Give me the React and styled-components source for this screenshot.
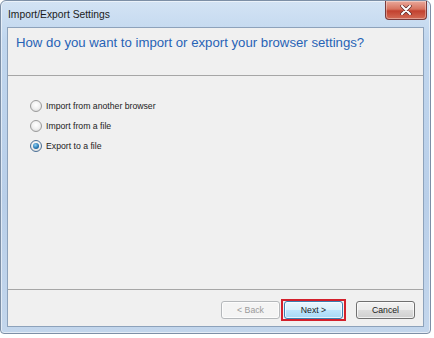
import React, { useState } from 'react';
import styled, { createGlobalStyle } from 'styled-components';

const Global = createGlobalStyle`
  body {
    margin: 0;
    background: #ffffff;
    font-family: "Liberation Sans", Arial, sans-serif;
  }
`;

const Window = styled.div`
  width: 431px;
  height: 334px;
  box-sizing: border-box;
  border: 1px solid #7d8fa6;
  border-radius: 6px 6px 4px 4px;
  background: linear-gradient(180deg, #d3e3f4 0%, #c0d6ee 12%, #b9cfe9 60%, #c3d6ec 100%);
  display: flex;
  flex-direction: column;
  padding: 0 6px 6px 6px;
  box-shadow: inset 0 0 0 1px rgba(255, 255, 255, 0.55);
`;

const TitleBar = styled.div`
  height: 26px;
  display: flex;
  align-items: flex-start;
  justify-content: space-between;
`;

const Title = styled.div`
  font-size: 10.3px;
  color: #1b1b1b;
  padding: 8px 0 0 1px;
`;

const CloseButton = styled.div`
  width: 40px;
  height: 18px;
  margin-right: -3px;
  border: 1px solid #7a3b3b;
  border-top: none;
  border-radius: 0 0 4px 4px;
  background: linear-gradient(180deg, #e9a99b 0%, #d7735f 45%, #c2412f 55%, #d36b55 100%);
  display: flex;
  align-items: center;
  justify-content: center;
  box-shadow: inset 0 0 0 1px rgba(255, 255, 255, 0.35);
`;

const Client = styled.div`
  flex: 1;
  background: #f0f0f0;
  border: 1px solid #8da2bb;
  display: flex;
  flex-direction: column;
`;

const Header = styled.div`
  height: 48px;
  border-bottom: 1px solid #a6a6a6;
  padding: 7px 0 0 8px;
  box-sizing: border-box;
`;

const Heading = styled.div`
  font-size: 13.2px;
  color: #2763b6;
`;

const Body = styled.div`
  flex: 1;
  padding: 24px 0 0 22px;
  display: flex;
  flex-direction: column;
  gap: 8px;
`;

const Option = styled.label`
  display: flex;
  align-items: center;
  gap: 4px;
  font-size: 8.7px;
  color: #222222;
  height: 12px;
  cursor: pointer;
`;

const RadioDot = styled.span`
  width: 10px;
  height: 10px;
  border-radius: 50%;
  border: 1px solid ${p => (p.$checked ? '#4a6f96' : '#9a9a9a')};
  background: radial-gradient(circle at 50% 40%, #ffffff 0%, #f0f0f0 50%, #d0d0d0 100%);
  display: flex;
  align-items: center;
  justify-content: center;
  &::after {
    content: '';
    display: ${p => (p.$checked ? 'block' : 'none')};
    width: 6px;
    height: 6px;
    border-radius: 50%;
    background: radial-gradient(circle at 40% 35%, #8fd0f4 0%, #2a7bb6 55%, #17456f 100%);
  }
`;

const Footer = styled.div`
  height: 37px;
  border-top: 1px solid #a6a6a6;
  display: flex;
  align-items: center;
  justify-content: flex-end;
  padding: 3px 8px 0 0;
  box-sizing: border-box;
`;

const Button = styled.button`
  width: 59px;
  height: 18px;
  padding: 0;
  font-family: inherit;
  font-size: 8.7px;
  border-radius: 3px;
  border: 1px solid ${p => (p.$primary ? '#3c7fb1' : p.disabled ? '#b5b8bb' : '#707070')};
  color: ${p => (p.disabled ? '#9a9a9a' : '#1a1a1a')};
  background: ${p =>
    p.disabled
      ? '#f4f4f4'
      : p.$primary
      ? 'linear-gradient(180deg, #eaf6fd 0%, #d9f0fc 50%, #bee6fd 50%, #a7d9f5 100%)'
      : 'linear-gradient(180deg, #f2f2f2 0%, #ebebeb 50%, #dddddd 50%, #cfcfcf 100%)'};
  box-shadow: inset 0 0 0 1px rgba(255, 255, 255, 0.7);
  margin-left: ${p => p.$gap || 0}px;
`;

const Highlight = styled.div`
  border: 2px solid #d3202b;
  padding: 0 1px;
  margin-left: 1px;
  display: flex;
`;

const options = ['Import from another browser', 'Import from a file', 'Export to a file'];

export default function App() {
  const [choice, setChoice] = useState(2);
  return (
    <>
      <Global />
      <Window>
        <TitleBar>
          <Title>Import/Export Settings</Title>
          <CloseButton>
            <svg width="12" height="10" viewBox="0 0 12 10">
              <path d="M2 1 L10 9 M10 1 L2 9" stroke="#5a2a2a" strokeWidth="3.4" strokeLinecap="round" />
              <path d="M2 1 L10 9 M10 1 L2 9" stroke="#ffffff" strokeWidth="2" strokeLinecap="round" />
            </svg>
          </CloseButton>
        </TitleBar>
        <Client>
          <Header>
            <Heading>How do you want to import or export your browser settings?</Heading>
          </Header>
          <Body>
            {options.map((o, i) => (
              <Option key={o} onClick={() => setChoice(i)}>
                <RadioDot $checked={choice === i} />
                {o}
              </Option>
            ))}
          </Body>
          <Footer>
            <Button disabled>&lt; Back</Button>
            <Highlight>
              <Button $primary>Next &gt;</Button>
            </Highlight>
            <Button $gap={10}>Cancel</Button>
          </Footer>
        </Client>
      </Window>
    </>
  );
}
